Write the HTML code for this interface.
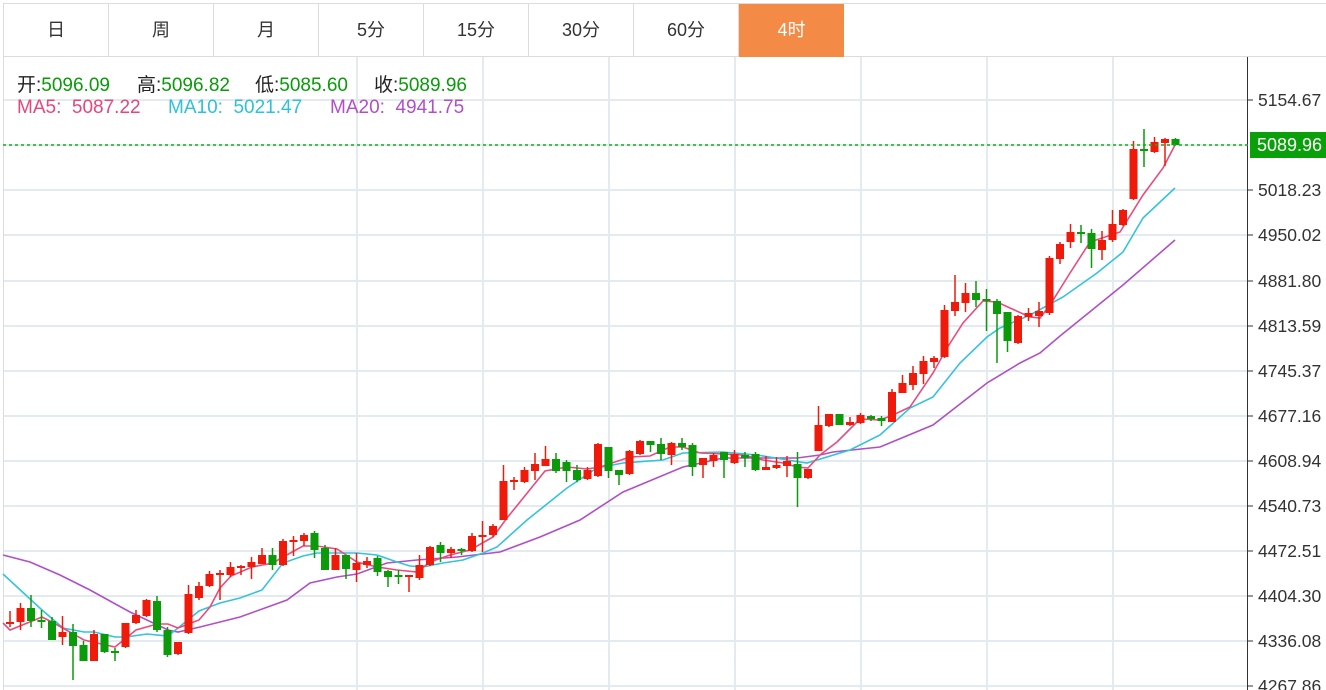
<!DOCTYPE html>
<html><head><meta charset="utf-8">
<style>
html,body{margin:0;padding:0;background:#fff;width:1326px;height:690px;overflow:hidden;font-family:"Liberation Sans","Noto Sans CJK SC",sans-serif;}
.tabs{position:absolute;left:3px;top:3px;height:54px;display:flex;border-top:1px solid #dcdcdc;border-bottom:1px solid #dcdcdc;border-left:1px solid #dcdcdc;width:1323px;box-sizing:border-box}
.tab{width:105px;height:53px;line-height:53px;text-align:center;font-size:18px;color:#333;border-right:1px solid #dcdcdc;box-sizing:border-box}
.tab.on{background:#f38a45;color:#fff;border-right:none}
.i{position:absolute;font-size:19px;white-space:pre;color:#222}
.g{color:#0a9a0a}
#chart{position:absolute;left:0;top:0}
</style></head><body>
<svg id="chart" width="1326" height="690" xmlns="http://www.w3.org/2000/svg"></svg>
<div class="tabs">
<div class="tab">日</div><div class="tab">周</div><div class="tab">月</div><div class="tab">5分</div><div class="tab">15分</div><div class="tab">30分</div><div class="tab">60分</div><div class="tab on">4时</div>
</div>
<div class="i" style="left:17px;top:70px">开:<span class="g">5096.09</span></div>
<div class="i" style="left:137px;top:70px">高:<span class="g">5096.82</span></div>
<div class="i" style="left:255px;top:70px">低:<span class="g">5085.60</span></div>
<div class="i" style="left:374px;top:70px">收:<span class="g">5089.96</span></div>
<div class="i" style="left:17px;top:97px;color:#e8457a">MA5:  5087.22</div>
<div class="i" style="left:168px;top:97px;color:#2ec1d9">MA10:  5021.47</div>
<div class="i" style="left:330px;top:97px;color:#b04fc6">MA20:  4941.75</div>
<script>
var s=document.getElementById('chart'),h='';
var G='#e3ebf1';
var ys=[100,145,190,235,281,326,371,416,461,506,551,596,641,686];
ys.forEach(function(y){h+='<line x1="3" y1="'+y+'" x2="1247" y2="'+y+'" stroke="'+G+'" stroke-width="2"/>';});
[357,483,609,735,861,987,1113].forEach(function(x){h+='<line x1="'+x+'" y1="57" x2="'+x+'" y2="690" stroke="'+G+'" stroke-width="2"/>';});
h+='<line x1="3.5" y1="57" x2="3.5" y2="690" stroke="#ddd"/>';
var labels=[[100,'5154.67'],[190,'5018.23'],[235,'4950.02'],[281,'4881.80'],[326,'4813.59'],[371,'4745.37'],[416,'4677.16'],[461,'4608.94'],[506,'4540.73'],[551,'4472.51'],[596,'4404.30'],[641,'4336.08'],[686,'4267.86']];
h+='<line x1="1247.5" y1="57" x2="1247.5" y2="690" stroke="#333"/>';
labels.forEach(function(l){h+='<line x1="1247" y1="'+l[0]+'" x2="1253" y2="'+l[0]+'" stroke="#333"/><text x="1258" y="'+(l[0]+6)+'" font-size="17.5" fill="#333" font-family="Liberation Sans,sans-serif">'+l[1]+'</text>';});
var c=[[622,624,611,627,1],[608,622,603,630,1],[608,621,595,627,0],[620,622,610,628,0],[621,640,617,640,0],[632,637,616,645,1],[632,646,624,680,0],[645,661,641,661,0],[634,661,630,661,1],[634,652,634,653,0],[651,652,648,661,0],[623,647,623,648,1],[615,623,610,624,1],[600,616,599,617,1],[601,630,596,632,0],[630,655,627,657,0],[642,654,642,655,1],[594,633,585,634,1],[586,598,582,600,1],[574,586,571,587,1],[573,575,570,600,1],[567,575,562,577,1],[566,567,565,575,1],[562,567,557,579,1],[555,564,548,564,1],[555,565,548,570,0],[541,565,539,566,1],[540,542,536,556,1],[535,541,533,546,1],[533,550,531,558,0],[548,570,545,570,0],[555,570,548,570,1],[555,569,555,579,0],[563,570,553,582,1],[561,565,557,568,1],[558,572,556,576,0],[571,577,570,587,0],[575,576,570,584,0],[575,576,575,592,1],[565,578,555,580,1],[547,565,546,566,1],[545,553,542,562,0],[549,553,547,558,1],[549,550,548,555,0],[536,551,533,552,1],[535,536,521,552,1],[526,535,524,537,1],[481,520,465,520,1],[480,482,477,490,1],[470,482,467,483,1],[464,471,453,480,1],[459,466,446,466,1],[459,471,453,473,0],[462,471,460,482,0],[470,480,465,482,0],[470,479,467,480,1],[444,476,443,477,1],[447,471,447,478,0],[470,475,470,485,0],[451,474,450,475,1],[441,454,440,455,1],[441,445,441,452,0],[444,454,438,460,0],[443,455,442,465,1],[443,447,438,450,0],[445,467,443,476,0],[458,465,458,478,1],[455,461,453,467,1],[452,460,452,478,0],[454,463,450,464,1],[455,458,452,467,0],[454,470,452,471,0],[467,470,456,470,1],[465,468,457,469,1],[461,466,456,477,1],[464,478,452,507,0],[469,478,469,479,1],[425,451,406,451,1],[414,426,414,427,1],[414,425,414,425,0],[422,425,417,426,1],[415,423,413,424,1],[416,419,415,421,0],[418,421,416,426,0],[392,422,389,422,1],[383,393,375,393,1],[373,385,366,390,1],[361,374,356,384,1],[358,362,356,368,1],[310,357,305,358,1],[302,311,275,316,1],[293,303,283,312,1],[293,300,281,307,0],[299,301,289,331,0],[301,314,299,363,0],[312,341,312,352,0],[316,343,315,344,1],[313,317,308,321,1],[311,316,302,327,1],[258,313,256,315,1],[244,259,242,264,1],[232,242,224,248,1],[232,234,225,243,0],[233,249,229,268,0],[240,250,231,260,1],[224,240,210,242,1],[210,225,209,226,1],[149,199,141,200,1],[149,151,129,167,0],[142,152,137,153,1],[139,143,138,166,1],[139,145,138,145,0]];
function pl(p,col){return '<polyline fill="none" stroke="'+col+'" stroke-width="1.6" points="'+p.map(function(q){return q.join(',')}).join(' ')+'"/>';}
var m20=[[3,555],[30,562],[60,575],[90,590],[130,612],[168,630],[178,632],[200,627],[240,617],[287,600],[310,583],[337,577],[357,574],[387,563],[417,560],[457,557],[500,552],[540,537],[580,520],[623,492],[683,467],[723,458],[767,458],[797,458],[820,455],[833,452],[880,447],[933,425],[987,383],[1020,363],[1040,353],[1060,336],[1123,285],[1175,240]];
var m10=[[3,574],[42,610],[63,628],[84,632],[94,632],[115,637],[126,637],[147,634],[168,636],[178,628],[199,611],[220,603],[240,598],[262,590],[283,563],[303,556],[317,553],[357,553],[377,555],[397,562],[410,566],[423,567],[443,563],[463,560],[483,553],[497,547],[527,520],[567,488],[597,468],[623,463],[663,460],[683,453],[723,452],[757,455],[800,462],[807,463],[850,450],[880,435],[910,408],[933,397],[960,363],[987,337],[1000,328],[1030,315],[1063,297],[1097,273],[1123,252],[1143,218],[1175,188]];
var m5=[[3,623],[10,630],[42,617],[52,622],[84,640],[115,647],[136,630],[157,624],[168,624],[178,628],[199,620],[210,607],[220,588],[231,576],[252,567],[273,563],[283,557],[303,546],[317,546],[337,549],[357,562],[377,567],[397,570],[417,572],[430,562],[450,555],[470,550],[493,537],[507,518],[545,471],[567,467],[587,469],[600,467],[630,457],[650,456],[670,447],[683,447],[700,453],[723,454],[743,455],[763,460],[783,463],[797,467],[808,468],[820,455],[837,442],[860,419],[880,420],[893,415],[910,407],[933,373],[947,348],[963,323],[983,301],[997,302],[1010,308],[1030,317],[1040,318],[1050,305],[1070,273],[1090,242],[1120,232],[1143,195],[1163,168],[1175,145]];
h+=pl(m20,'#b04fc6')+pl(m10,'#33c3dc')+pl(m5,'#ea4b7d');
c.forEach(function(d,i){var x=10+i*10.5,col=d[4]?'#f01a0a':'#0a9a0a';
h+='<line x1="'+x+'" y1="'+d[2]+'" x2="'+x+'" y2="'+d[3]+'" stroke="'+col+'" stroke-width="1.5"/>';
h+='<rect x="'+(x-4)+'" y="'+d[0]+'" width="8" height="'+Math.max(2,d[1]-d[0])+'" fill="'+col+'"/>';});
h+='<line x1="3" y1="145" x2="1250" y2="145" stroke="#14b014" stroke-width="1.5" stroke-dasharray="3,3"/>';
h+='<rect x="1250" y="132" width="76" height="26" fill="#0aa00a"/><text x="1257" y="151" font-size="18" fill="#fff" font-family="Liberation Sans,sans-serif">5089.96</text>';
s.innerHTML=h;
</script>
</body></html>
